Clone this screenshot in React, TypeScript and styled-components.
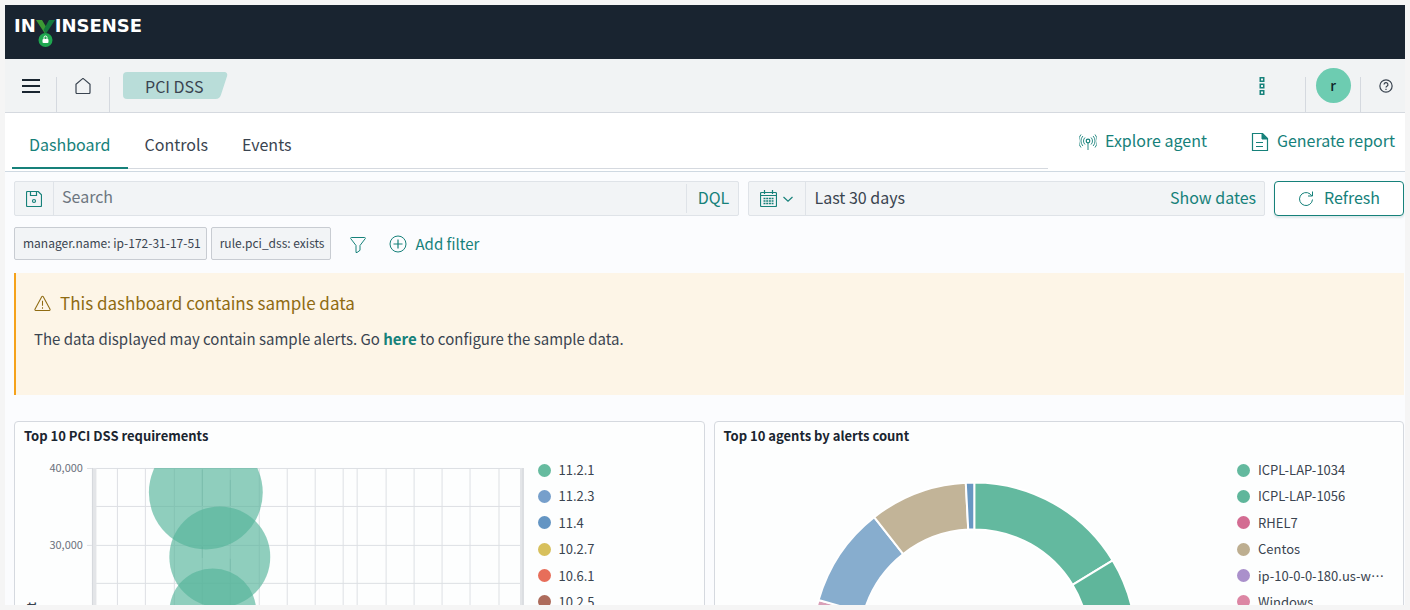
import React from "react";
import styled, { createGlobalStyle } from "styled-components";

const c = {
  teal: "#16817a",
  text: "#3a4450",
  ink: "#1a2530",
  line: "#d5d9df",
  field: "#f2f4f6",
  page: "#fbfcfe",
};

const GlobalStyle = createGlobalStyle`
  *, *::before, *::after { box-sizing: border-box; }
  body {
    margin: 0;
    background: #f5f5f5;
    color: ${c.text};
    font-family: "Noto Sans CJK SC", "Open Sans", sans-serif;
    font-size: 16px;
    line-height: 24px;
  }
  button, input { font: inherit; color: inherit; margin: 0; }
  button { border: 0; padding: 0; background: none; cursor: pointer; }
  a { color: ${c.teal}; text-decoration: none; }
  h1, h2, p, ul { margin: 0; padding: 0; }
  svg { display: block; flex: none; }
`;

const Frame = styled.div`
  margin: 5px;
  height: calc(100vh - 10px);
  overflow: hidden;
  background: ${c.page};
`;

const Brand = styled.header`
  height: 54px;
  padding: 8px 9px;
  background: #192430;
`;

const Logo = styled.a`
  display: inline-flex;
  align-items: flex-start;
  color: #fff;
  font-family: "DejaVu Sans", Inter, sans-serif;
  font-size: 18px;
  font-weight: 700;
  line-height: 22px;
`;

const NavBar = styled.nav`
  display: flex;
  align-items: flex-start;
  height: 54px;
  background: #f1f3f4;
  border-bottom: 1px solid ${c.line};
`;

const NavCell = styled.div<{ $width: number; $divided?: boolean }>`
  display: flex;
  flex: none;
  justify-content: center;
  width: ${(p) => p.$width}px;
  height: 35px;
  margin-top: 18px;
  border-right: ${(p) => (p.$divided ? `1px solid ${c.line}` : "0")};
`;

const HelpCell = styled(NavCell)`
  padding-left: 6px;
`;

const IconButton = styled.button<{ $color?: string }>`
  display: flex;
  align-items: center;
  justify-content: center;
  height: 18px;
  color: ${(p) => p.$color ?? c.teal};
`;

const Crumb = styled.a`
  position: relative;
  z-index: 0;
  height: 27px;
  margin: 13px 0 0 13px;
  padding: 0 26px 0 22px;
  color: ${c.text};
  line-height: 28px;

  &::before,
  &::after {
    content: "";
    position: absolute;
    z-index: -1;
    top: 0;
    bottom: 0;
    border-radius: 4px;
    background: #b9ddd9;
  }
  &::before { left: 0; right: 16px; }
  &::after { left: 16px; right: 5px; transform: skewX(-18deg); }
`;

const Spacer = styled.div`
  flex: 1;
`;

const Avatar = styled.button`
  width: 35px;
  height: 35px;
  margin-top: -9px;
  border-radius: 50%;
  background: #6dccb1;
  color: #10242a;
  font-size: 14px;
  font-weight: 500;
  line-height: 35px;
`;

const TabBar = styled.div`
  display: flex;
  align-items: flex-start;
  height: 59px;
  padding: 0 10px 0 7px;
  background: #fff;
  border-bottom: 1px solid #cfd9e2;
`;

const Tabs = styled.div`
  display: flex;
  flex: 1;
  height: 56px;
  border-bottom: 1px solid ${c.line};
`;

const Tab = styled.button<{ $active?: boolean }>`
  height: 56px;
  padding: 8px 17px 0;
  color: ${(p) => (p.$active ? c.teal : c.text)};
  border-bottom: 2px solid ${(p) => (p.$active ? c.teal : "transparent")};
`;

const TabActions = styled.div`
  display: flex;
  gap: 44px;
  padding: 15px 0 0 31px;
`;

const ActionButton = styled.button<{ $small?: boolean }>`
  display: flex;
  align-items: center;
  gap: ${(p) => (p.$small ? 9 : 8)}px;
  color: ${c.teal};
  font-size: ${(p) => (p.$small ? 15 : 16)}px;
`;

const Label = styled.span`
  padding-bottom: 3px;
`;

const Content = styled.main`
  padding: 9px 1px 0 9px;
`;

const QueryRow = styled.div`
  display: grid;
  grid-template-columns: minmax(0, 7fr) minmax(0, 5fr) 130px;
  gap: 9px;
`;

const Field = styled.div`
  display: flex;
  height: 35px;
  background: ${c.field};
  border: 1px solid #dfe3e8;
  border-radius: 2px;
`;

const FieldButton = styled.button<{ $width: number; $side?: "left" | "right" }>`
  display: flex;
  flex: none;
  align-items: center;
  justify-content: center;
  gap: 6px;
  width: ${(p) => p.$width}px;
  color: ${c.teal};
  border-right: ${(p) => (p.$side === "right" ? "1px solid #dfe3e8" : "0")};
  border-left: ${(p) => (p.$side === "left" ? "1px solid #dfe3e8" : "0")};
`;

const LanguageButton = styled(FieldButton)`
  margin: 2px 0;
  padding-left: 3px;
`;

const SearchInput = styled.input`
  flex: 1;
  min-width: 0;
  padding: 0 8px 5px;
  border: 0;
  background: none;
  outline: 0;
  &::placeholder { color: #6d7680; opacity: 1; }
`;

const DateRange = styled.button`
  flex: 1;
  padding: 0 9px 3px;
  text-align: left;
`;

const RefreshButton = styled.button`
  display: flex;
  align-items: center;
  justify-content: center;
  gap: 10px;
  height: 35px;
  color: ${c.teal};
  background: #fff;
  border: 1px solid ${c.teal};
  border-radius: 4px;
  box-shadow: 0 2px 2px rgba(20, 90, 90, 0.12);
`;

const FilterRow = styled.div`
  display: flex;
  align-items: center;
  gap: 4px;
  margin-top: 11px;
`;

const Chip = styled.button`
  height: 33px;
  padding: 0 5px 1px 8px;
  background: ${c.field};
  border: 1px solid #c8ccd2;
  border-radius: 2px;
  font-size: 12px;
  line-height: 30px;
`;

const FilterMenu = styled(IconButton)`
  width: 17px;
  margin: 2px 18px 0 15px;
`;

const Callout = styled.section`
  height: 122px;
  margin-top: 13px;
  padding: 18px;
  background: #fdf5e7;
  border-left: 2px solid #f5a21b;
`;

const CalloutTitle = styled.h1`
  display: flex;
  align-items: center;
  gap: 9px;
  color: #8f6b12;
  font-size: 17px;
  font-weight: 400;
  line-height: 24px;
`;

const CalloutText = styled.p`
  margin-top: 12px;
  font-size: 15px;
  a { font-weight: 700; }
`;

const Panels = styled.div`
  display: grid;
  grid-template-columns: repeat(2, minmax(0, 1fr));
  gap: 9px;
  margin-top: 26px;
`;

const Panel = styled.section`
  height: 340px;
  background: #fdfefe;
  border: 1px solid ${c.line};
  border-radius: 4px;
`;

const PanelTitle = styled.h2`
  padding: 4px 9px 0;
  color: ${c.ink};
  font-size: 13px;
  font-weight: 700;
  line-height: 20px;
`;

const PanelBody = styled.div`
  display: flex;
  align-items: flex-start;
  padding-top: 4px;
  > svg { flex: 1; min-width: 0; }
`;

const Legend = styled.ul`
  display: flex;
  flex: none;
  flex-direction: column;
  justify-content: space-between;
  width: 166px;
  height: 150px;
  margin-top: 11px;
  padding-right: 15px;
  list-style: none;
  font-size: 13px;
  line-height: 18px;
`;

const LegendItem = styled.li<{ $color: string }>`
  display: flex;
  align-items: center;
  gap: 8px;
  &::before {
    content: "";
    flex: none;
    width: 13px;
    height: 13px;
    border-radius: 50%;
    background: ${(p) => p.$color};
  }
`;

const LegendLabel = styled.span`
  overflow: hidden;
  white-space: nowrap;
  text-overflow: ellipsis;
`;

const Icon = ({ size = 16, children, box = 16 }: { size?: number; box?: number; children: React.ReactNode }) => (
  <svg width={size} height={size} viewBox={`0 0 ${box} ${box}`} fill="none" stroke="currentColor" aria-hidden="true">
    {children}
  </svg>
);

const LogoMark = () => (
  <svg width="19" height="32" viewBox="0 0 19 32" aria-hidden="true">
    <path d="M0 5h6l4.500 7.500L9.500 18h-1z" fill="#3c9a34" />
    <path d="M19 5h-6L7.500 15l2 3h1z" fill="#13783d" />
    <circle cx="9.500" cy="25" r="7" fill="#1fa750" />
    <rect x="6.500" y="24" width="6" height="4" rx="1" fill="#fff" />
    <path d="M8 24v-1.500a1.500 1.500 0 0 1 3 0V24" fill="none" stroke="#fff" />
  </svg>
);

const requirements: [string, string][] = [
  ["11.2.1", "#66bb9f"],
  ["11.2.3", "#769fcb"],
  ["11.4", "#6495c3"],
  ["10.2.7", "#d7c05c"],
  ["10.6.1", "#e76e5a"],
  ["10.2.5", "#ad6c5c"],
];

const agents: [string, string][] = [
  ["ICPL-LAP-1034", "#63b99e"],
  ["ICPL-LAP-1056", "#5fb69b"],
  ["RHEL7", "#d36c92"],
  ["Centos", "#bdae90"],
  ["ip-10-0-0-180.us-west-2.compute", "#aa90cb"],
  ["Windows", "#dc86a4"],
];

const gridX = [102, 130, 159, 187, 215, 244, 272, 300, 328, 342, 371, 399, 427, 455, 484];
const gridY = [18, 56, 95, 133, 172, 210];
const bubbles = [
  { x: 191, y: 42.5, r: 57 },
  { x: 205, y: 107, r: 50.5 },
  { x: 198, y: 162, r: 43.5 },
];

const BubbleChart = () => (
  <svg viewBox="0 0 523 250" role="img" aria-label="Top 10 PCI DSS requirements">
    <clipPath id="plot">
      <rect x="77" y="18" width="433" height="230" />
    </clipPath>
    <g stroke="#dde0e4">
      {gridX.map((x) => (
        <path key={x} d={`M${x + 0.5} 18V248`} />
      ))}
      {gridY.map((y) => (
        <path key={y} d={`M77 ${y + 0.5}H509`} />
      ))}
      <path d="M72 18.500h5M72 95.500h5" />
    </g>
    <path d="M79.500 18V248M507.500 18V248" stroke="#e3e5e8" strokeWidth="4" />
    <path d="M77.500 18V248M508.500 18V248" stroke="#d4d7dc" />
    <g clipPath="url(#plot)" fill="#54b399" fillOpacity="0.65">
      {bubbles.map((b) => (
        <circle key={b.y} cx={b.x} cy={b.y} r={b.r} />
      ))}
    </g>
    <path d="M187.500 20V56M187.500 97V108M215.500 30V56M215.500 109V121" stroke="#4f9f8c" strokeOpacity="0.2" />
    <g fill="#6b717c" fontSize="11" textAnchor="end">
      <text x="68" y="22">40,000</text>
      <text x="68" y="99">30,000</text>
    </g>
    <text transform="translate(21 152) rotate(-90)" textAnchor="end" fontSize="12" fontWeight="700" fill="#3a4450">
      Count
    </text>
  </svg>
);

const slices = [
  { from: 0, to: 58.8, color: "#63b99f" },
  { from: 58.8, to: 150, color: "#5fb69b" },
  { from: 150, to: 230, color: "#d36c92" },
  { from: 230, to: 285.9, color: "#d9a0b8" },
  { from: 285.9, to: 321.8, color: "#87adce" },
  { from: 321.8, to: 357, color: "#c2b498" },
  { from: 357, to: 360, color: "#6897c2" },
];

const slicePath = (from: number, to: number) => {
  const at = (deg: number, r: number) => {
    const a = (deg * Math.PI) / 180;
    return `${(259.5 + r * Math.sin(a)).toFixed(2)} ${(194.5 - r * Math.cos(a)).toFixed(2)}`;
  };
  return `M${at(from, 162)}A162 162 0 0 1 ${at(to, 162)}L${at(to, 115)}A115 115 0 0 0 ${at(from, 115)}Z`;
};

const DonutChart = () => (
  <svg viewBox="0 0 523 370" role="img" aria-label="Top 10 agents by alerts count">
    {slices.map((s) => (
      <path key={s.from} d={slicePath(s.from, s.to)} fill={s.color} stroke="#fff" strokeWidth="2" />
    ))}
  </svg>
);

const ChartLegend = ({ items }: { items: [string, string][] }) => (
  <Legend>
    {items.map(([label, color]) => (
      <LegendItem key={label} $color={color}>
        <LegendLabel>{label}</LegendLabel>
      </LegendItem>
    ))}
  </Legend>
);

export default function App() {
  return (
    <>
      <GlobalStyle />
      <Frame>
        <Brand>
          <Logo href="#" aria-label="Invinsense">
            <span>IN</span>
            <LogoMark />
            <span>INSENSE</span>
          </Logo>
        </Brand>

        <NavBar>
          <NavCell $width={52} $divided>
            <IconButton $color={c.ink} aria-label="Menu">
              <Icon size={18} box={18}>
                <path d="M0 3h18M0 9h18M0 15h18" strokeWidth="2" />
              </Icon>
            </IconButton>
          </NavCell>
          <NavCell $width={53} $divided>
            <IconButton $color={c.text} aria-label="Home">
              <Icon>
                <path d="M1 6.300 7.300.9a1 1 0 0 1 1.400 0L15 6.300v8.200a1 1 0 0 1-1 1H2a1 1 0 0 1-1-1z" strokeWidth="1.200" />
              </Icon>
            </IconButton>
          </NavCell>
          <Crumb href="#">PCI DSS</Crumb>
          <Spacer />
          <NavCell $width={87} $divided>
            <IconButton aria-label="More options">
              <Icon size={18} box={18}>
                <path d="M7.250.75h3.500v3.500h-3.500zM7.250 7.250h3.500v3.500h-3.500zM7.250 13.750h3.500v3.500h-3.500z" strokeWidth="1.500" />
              </Icon>
            </IconButton>
          </NavCell>
          <NavCell $width={55} $divided>
            <Avatar>r</Avatar>
          </NavCell>
          <HelpCell $width={44}>
            <IconButton $color={c.text} aria-label="Help">
              <Icon size={14}>
                <circle cx="8" cy="8" r="7" strokeWidth="1.400" />
                <path d="M5.800 6.300a2.200 2.200 0 1 1 3.300 1.900c-.8.5-1.100.8-1.100 1.600M8 11v1.500" strokeWidth="1.400" />
              </Icon>
            </IconButton>
          </HelpCell>
        </NavBar>

        <TabBar>
          <Tabs role="tablist">
            <Tab role="tab" aria-selected $active>Dashboard</Tab>
            <Tab role="tab">Controls</Tab>
            <Tab role="tab">Events</Tab>
          </Tabs>
          <TabActions>
            <ActionButton>
              <Icon size={18} box={18}>
                <circle cx="9" cy="8" r="1.800" strokeWidth="1.200" />
                <path d="M9 10v7M6 11.500a4.800 4.800 0 0 1 0-7M12 11.500a4.800 4.800 0 0 0 0-7M3.900 13a7.400 7.400 0 0 1 0-10M14.100 13a7.400 7.400 0 0 0 0-10M2 14.500a10 10 0 0 1 0-13M16 14.500a10 10 0 0 0 0-13" strokeWidth=".9" />
              </Icon>
              <Label>Explore agent</Label>
            </ActionButton>
            <ActionButton>
              <Icon size={18} box={18}>
                <path d="M1.500.5h10l5 5v12h-15zM5 9.500h7M5 13.500h7" strokeWidth="1.200" />
                <path d="M11 .5v5.500h5.500z" fill="currentColor" />
              </Icon>
              <Label>Generate report</Label>
            </ActionButton>
          </TabActions>
        </TabBar>

        <Content>
          <QueryRow>
            <Field>
              <FieldButton $width={39} $side="right" aria-label="Saved queries">
                <Icon>
                  <path d="M1.500.5h10.700l3.300 3.300v10.700a1 1 0 0 1-1 1h-13a1 1 0 0 1-1-1v-13a1 1 0 0 1 1-1zM4.500.5v4h6v-4" strokeWidth="1.200" />
                  <circle cx="8" cy="10" r="1.500" strokeWidth="1.200" />
                </Icon>
              </FieldButton>
              <SearchInput placeholder="Search" aria-label="Search" />
              <LanguageButton $width={52} $side="left">
                <Label>DQL</Label>
              </LanguageButton>
            </Field>
            <Field>
              <FieldButton $width={57} $side="right" aria-label="Quick date selection">
                <Icon size={17} box={17}>
                  <path d="M1.500 2.500h14a1 1 0 0 1 1 1v12a1 1 0 0 1-1 1h-14a1 1 0 0 1-1-1v-12a1 1 0 0 1 1-1zM.5 5.500h16M4.500 0v4M12.500 0v4" strokeWidth="1.200" />
                  <path d="M3.500 8.500h10M3.500 11h10M3.500 13.500h10" strokeDasharray="2 .7" strokeWidth="1.500" />
                </Icon>
                <Icon size={10} box={10}>
                  <path d="M.5 3 5 7.200 9.500 3" strokeWidth="1.200" />
                </Icon>
              </FieldButton>
              <DateRange>Last 30 days</DateRange>
              <FieldButton $width={102}>
                <Label>Show dates</Label>
              </FieldButton>
            </Field>
            <RefreshButton>
              <Icon>
                <path d="M14.500 8.500a6.500 6.500 0 1 1-2.500-5.600l2 2M14.500.5v4.500H10" />
              </Icon>
              <Label>Refresh</Label>
            </RefreshButton>
          </QueryRow>

          <FilterRow>
            <Chip>manager.name: ip-172-31-17-51</Chip>
            <Chip>rule.pci_dss: exists</Chip>
            <FilterMenu aria-label="Filter options">
              <Icon>
                <path d="M1.300.5h13.400a.7.700 0 0 1 .5 1.200L10 8.500v4.800l-3 2.200h-1V8.500L.8 1.700A.7.700 0 0 1 1.300.5z" />
              </Icon>
            </FilterMenu>
            <ActionButton $small>
              <Icon size={18} box={18}>
                <circle cx="9" cy="9" r="8" />
                <path d="M9 4.500v9M4.500 9h9" strokeWidth="1.200" />
              </Icon>
              Add filter
            </ActionButton>
          </FilterRow>

          <Callout>
            <CalloutTitle>
              <Icon size={17}>
                <path d="M7.400 1.500a.7.700 0 0 1 1.200 0l6.500 12a.7.700 0 0 1-.6 1h-13a.7.700 0 0 1-.6-1zM8 5.500v4.500M8 11.500V13" />
              </Icon>
              This dashboard contains sample data
            </CalloutTitle>
            <CalloutText>
              The data displayed may contain sample alerts. Go <a href="#">here</a> to configure the sample data.
            </CalloutText>
          </Callout>

          <Panels>
            <Panel>
              <PanelTitle>Top 10 PCI DSS requirements</PanelTitle>
              <PanelBody>
                <BubbleChart />
                <ChartLegend items={requirements} />
              </PanelBody>
            </Panel>
            <Panel>
              <PanelTitle>Top 10 agents by alerts count</PanelTitle>
              <PanelBody>
                <DonutChart />
                <ChartLegend items={agents} />
              </PanelBody>
            </Panel>
          </Panels>
        </Content>
      </Frame>
    </>
  );
}
